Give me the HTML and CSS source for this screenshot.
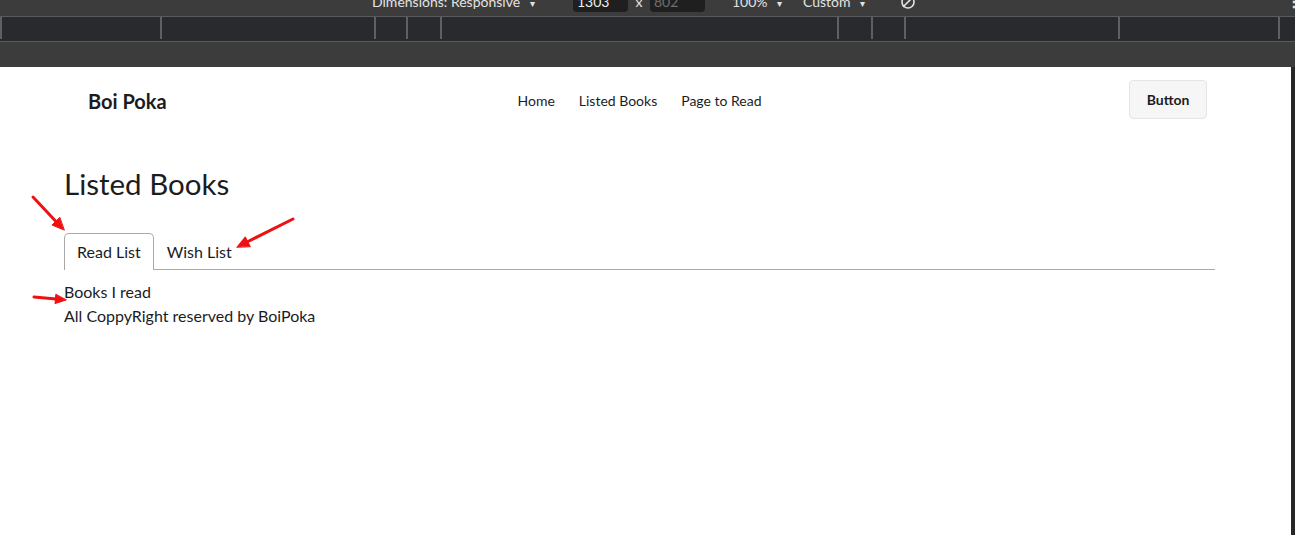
FILE: index.html
```html
<!DOCTYPE html>
<html lang="en">
<head>
<meta charset="utf-8">
<title>Boi Poka</title>
<link rel="stylesheet" href="styles.css">
</head>
<body>
<div class="devtools">
  <div class="dt-bar">
    <div class="dt-row">
      <span class="dt-dims">Dimensions: Responsive <span class="caret">▾</span></span>
      <span class="dt-input dt-w">1303</span>
      <span class="dt-x">x</span>
      <span class="dt-input dt-h">802</span>
      <span class="dt-zoom">100% <span class="caret">▾</span></span>
      <span class="dt-throttle">Custom <span class="caret">▾</span></span>
      <svg class="dt-icon" width="18" height="18" viewBox="0 0 18 18"><circle cx="8" cy="9" r="6" fill="none" stroke="#e3e3e3" stroke-width="1.6"/><path d="M3 14 L14 3" stroke="#e3e3e3" stroke-width="1.6"/></svg>
      <span class="dt-more">⋮</span>
    </div>
  </div>
  <div class="dt-ruler">
    <div class="seg" style="width:160px"></div>
    <div class="seg" style="width:214px"></div>
    <div class="seg" style="width:32px"></div>
    <div class="seg" style="width:34px"></div>
    <div class="seg" style="width:397px"></div>
    <div class="seg" style="width:34px"></div>
    <div class="seg" style="width:33px"></div>
    <div class="seg" style="width:214px"></div>
    <div class="seg" style="width:160px"></div>
    <div class="seg seg-last"></div>
  </div>
  <div class="dt-gap"></div>
</div>

<div class="viewport">
  <div class="page">
    <div class="container">
      <nav class="navbar">
        <div class="nav-start"><a class="logo">Boi Poka</a></div>
        <ul class="menu">
          <li><a>Home</a></li>
          <li><a>Listed Books</a></li>
          <li><a>Page to Read</a></li>
        </ul>
        <div class="nav-end"><button class="btn">Button</button></div>
      </nav>

      <h2 class="title">Listed Books</h2>

      <ul class="tab-list">
        <li class="tab tab-selected">Read List</li>
        <li class="tab">Wish List</li>
      </ul>
      <div class="tab-panel">Books I read</div>
      <footer class="footer">All CoppyRight reserved by BoiPoka</footer>
    </div>
  </div>
  <div class="strip"></div>
</div>

<svg class="annotations" width="1295" height="535" viewBox="0 0 1295 535">
  <g fill="#ee1111" stroke="#ee1111" stroke-linecap="round">
    <line x1="33" y1="197" x2="56" y2="221.5" stroke-width="3"/>
    <polygon points="64,230 52,225 59.6,217.6" stroke-width="1" stroke-linejoin="round"/>
    <line x1="293" y1="219" x2="248" y2="241.5" stroke-width="3"/>
    <polygon points="237,247 245.3,236.8 250.2,246.4" stroke-width="1" stroke-linejoin="round"/>
    <line x1="34" y1="297" x2="56" y2="299" stroke-width="3"/>
    <polygon points="66,300 55,303.6 55.8,294.6" stroke-width="1" stroke-linejoin="round"/>
  </g>
</svg>
</body>
</html>
```
FILE: styles.css
```css
* { box-sizing: border-box; }

html, body {
  margin: 0;
  padding: 0;
  height: 100%;
}

body {
  font-family: "Lato", "Noto Sans", sans-serif;
  color: #1c1c1f;
  background: #3c3c3c;
  overflow: hidden;
  position: relative;
}

/* ---------- devtools chrome ---------- */
.devtools {
  background: #3c3c3c;
}

.dt-bar {
  height: 17px;
  overflow: hidden;
  border-bottom: 1px solid #5a5a5a;
}

.dt-row {
  display: flex;
  align-items: center;
  height: 30px;
  margin-top: -14px;
  font-size: 14px;
  color: #e3e3e3;
  white-space: nowrap;
}

.caret {
  font-size: 10px;
  margin-left: 6px;
}

.dt-dims { margin-left: 372px; width: 201px; }

.dt-input {
  display: inline-flex;
  align-items: center;
  width: 55px;
  height: 22px;
  padding-left: 4px;
  border-radius: 4px;
  background: #1f1f1f;
  color: #f0f0f0;
}

.dt-h { color: #6f6f6f; }

.dt-x { width: 22px; text-align: center; }

.dt-zoom { margin-left: 27px; width: 71px; }
.dt-throttle { width: 97px; }

.dt-icon { margin-top: 2px; }

.dt-more {
  margin-left: auto;
  margin-right: 1px;
  width: 8px;
  font-size: 16px;
  font-weight: 700;
}

.dt-ruler {
  display: flex;
  height: 25px;
  background: #292a2d;
  border-bottom: 1px solid #5a5a5a;
}

.seg {
  height: 22px;
  flex: none;
  border-left: 2px solid #5f6063;
}
.seg-last { flex: 1; }

.dt-gap {
  height: 25px;
  background: #3c3c3c;
}

/* ---------- page viewport ---------- */
.viewport {
  display: flex;
  height: 468px;
}

.page {
  width: 1291px;
  flex: none;
  background: #ffffff;
}

.strip {
  flex: 1;
  background: #262626;
}

.container {
  width: 1151px;
  margin-left: 64px;
}

.navbar {
  display: grid;
  grid-template-columns: 1fr auto 1fr;
  align-items: center;
  height: 64px;
  padding: 0 8px;
}

.logo {
  display: inline-block;
  padding: 3px 16px 0;
  font-size: 20px;
  font-weight: 700;
  color: #1c1c1f;
}

.menu {
  display: flex;
  gap: 24px;
  list-style: none;
  margin: 0;
  padding: 3px 0 0;
  font-size: 14px;
  line-height: 20px;
}

.menu a { color: #1c1c1f; }

.nav-end {
  display: flex;
  justify-content: flex-end;
}

.btn {
  height: 39px;
  width: 78px;
  padding: 1px 0 0;
  border: 1px solid #e5e5e5;
  border-radius: 4px;
  background: #f6f6f6;
  font-family: inherit;
  font-size: 14px;
  font-weight: 700;
  color: #1c1c1f;
}

.title {
  margin: 35px 0 31px;
  font-size: 29.5px;
  font-weight: 400;
  line-height: 36px;
}

.tab-list {
  display: flex;
  list-style: none;
  margin: 0 0 10px;
  padding: 0;
  border-bottom: 1px solid #aaaaaa;
}

.tab {
  margin-bottom: -1px;
  padding: 6px 12px;
  border: 1px solid transparent;
  border-bottom: none;
  font-size: 16px;
  line-height: 24px;
}

.tab-selected {
  background: #ffffff;
  border-color: #aaaaaa;
  border-radius: 5px 5px 0 0;
}

.tab-panel,
.footer {
  font-size: 16px;
  line-height: 24px;
}

/* ---------- annotation overlay ---------- */
.annotations {
  position: absolute;
  top: 0;
  left: 0;
  pointer-events: none;
}
```
